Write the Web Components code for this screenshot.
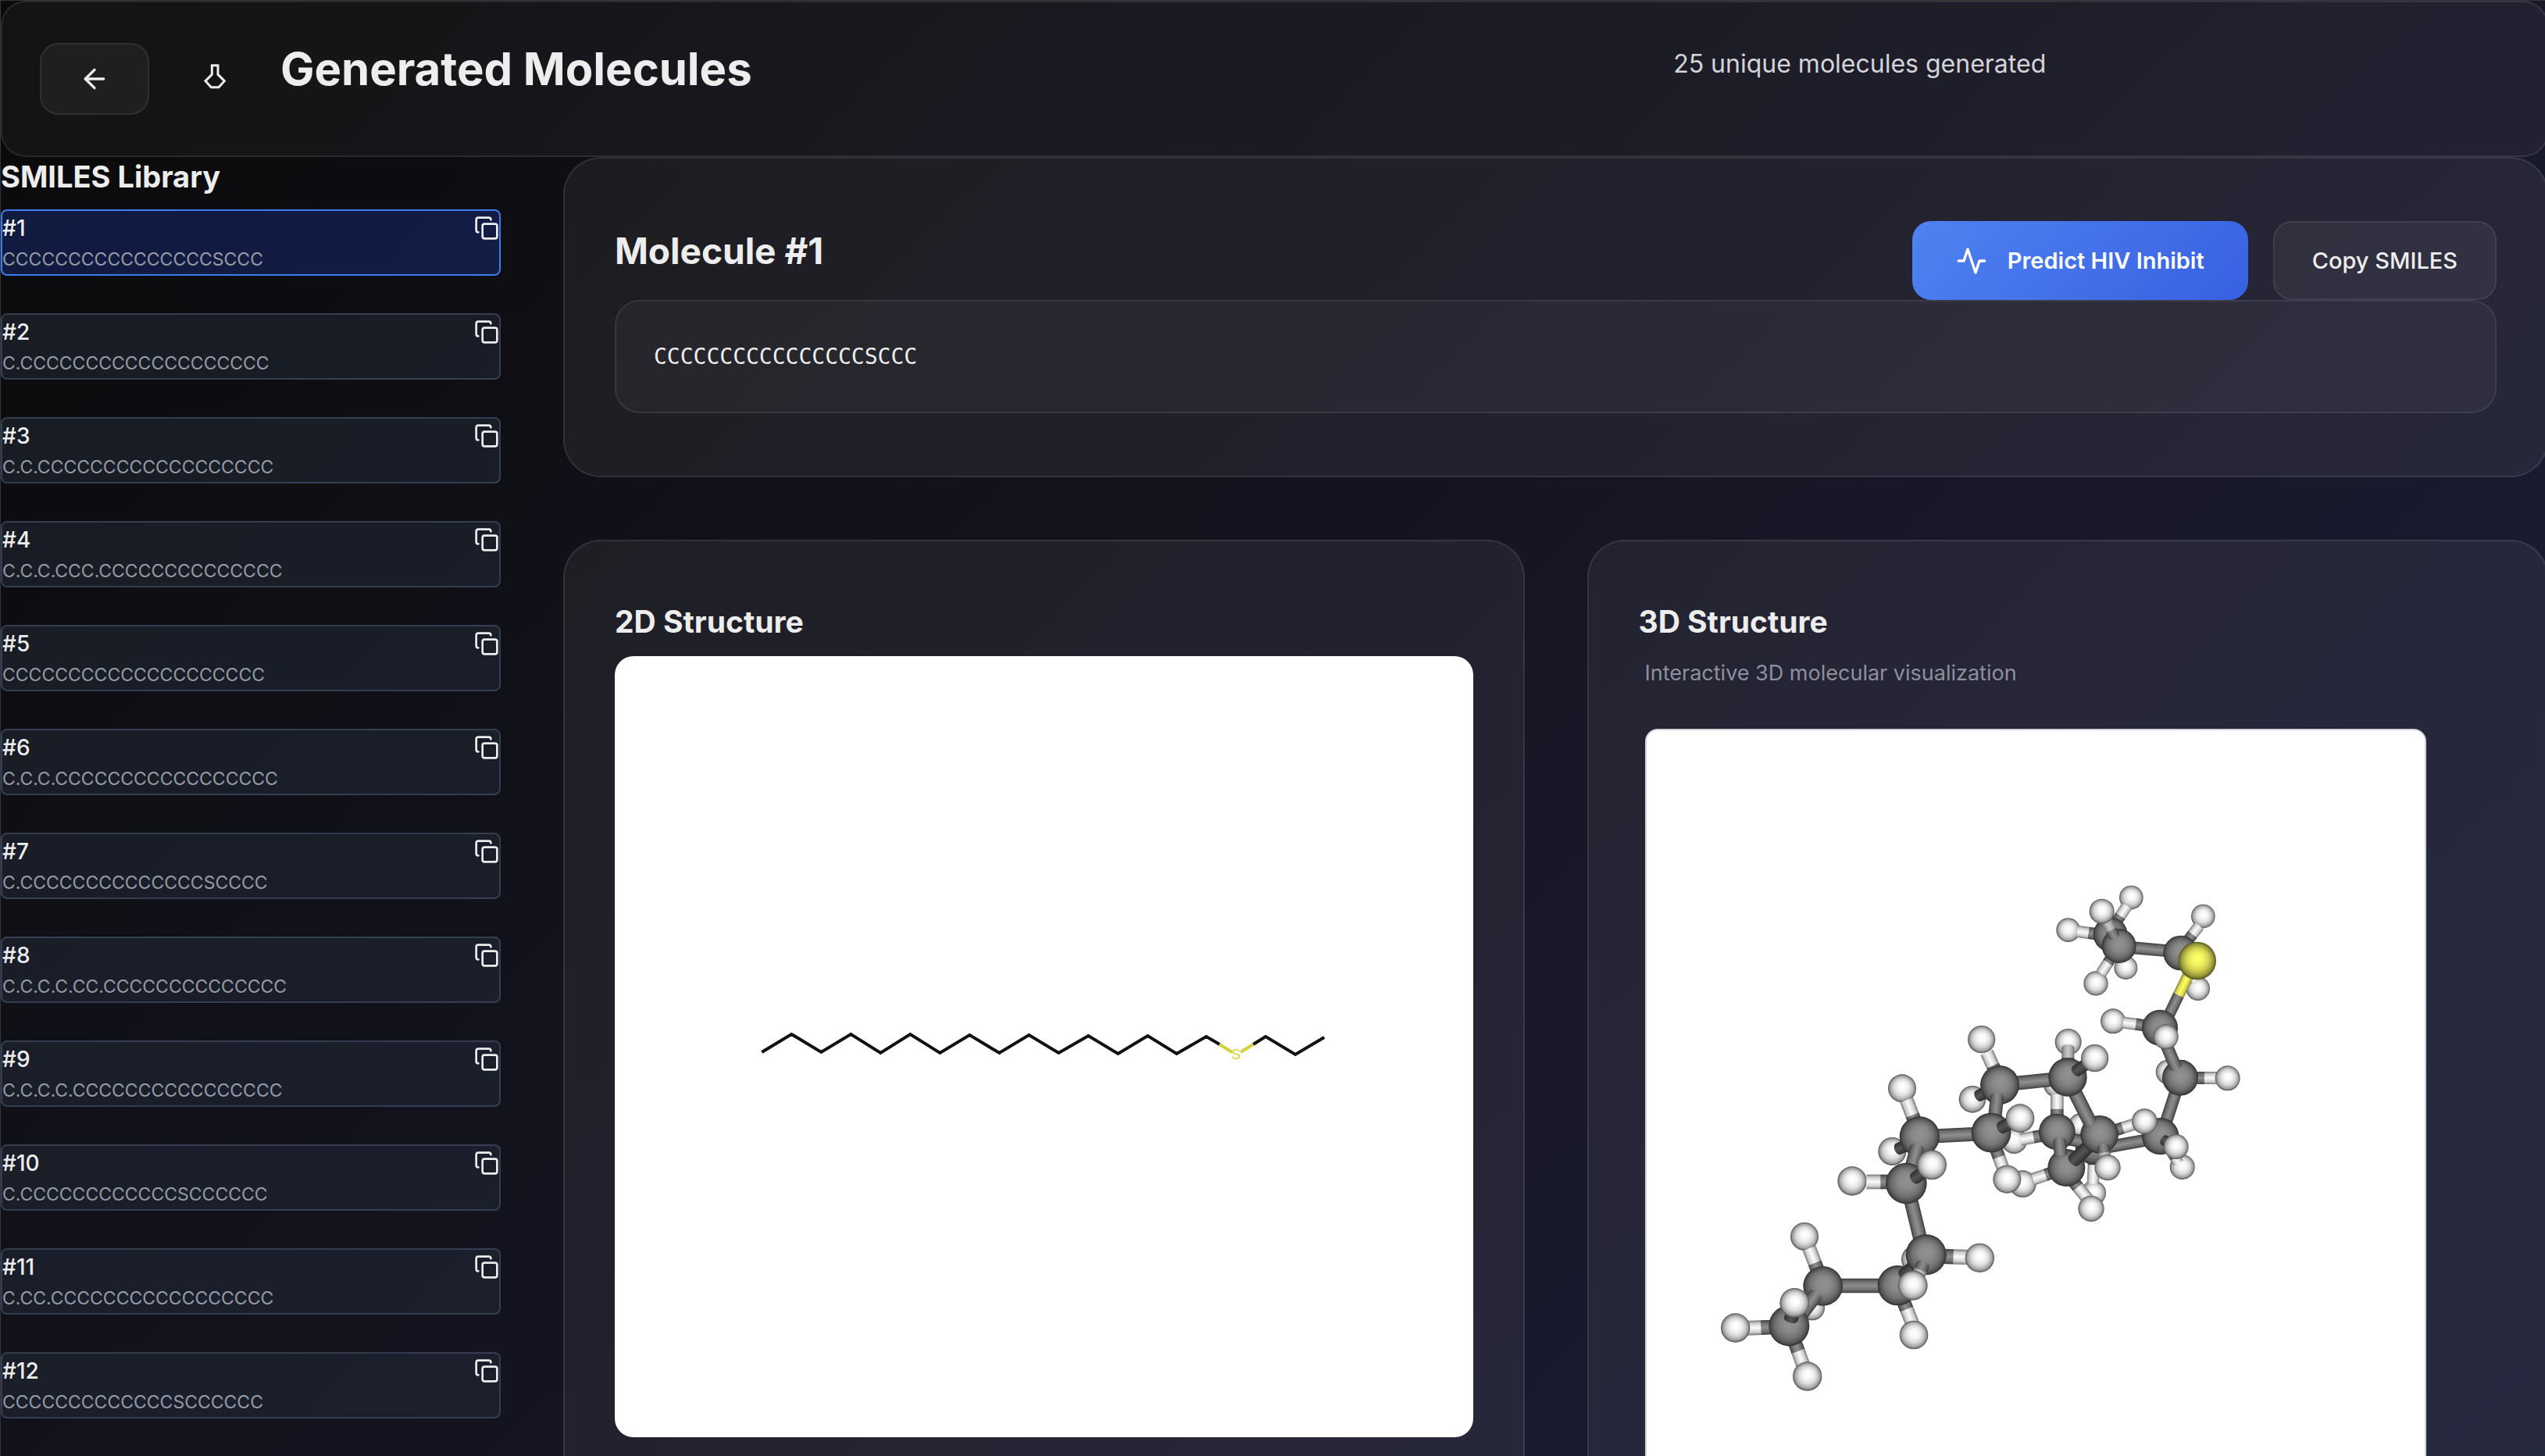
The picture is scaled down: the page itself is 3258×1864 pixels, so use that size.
<!DOCTYPE html>
<html lang="en">
<head>
<meta charset="utf-8">
<title>Generated Molecules</title>
<style>
  html { background: #0a0a0a; }
  body {
    margin: 0;
    height: 100vh;
    overflow: hidden;
    color: #ededed;
    font-family: Inter, "Liberation Sans", sans-serif;
    background: linear-gradient(135deg, #0a0a0a 0%, #1a1a2e 74%, #16213e 148%);
  }
</style>
</head>
<body>
<molecule-app></molecule-app>

<script>
const define = (name, html, setup) => customElements.define(name, class extends HTMLElement {
  constructor() {
    super();
    this.attachShadow({ mode: "open" }).innerHTML = html;
  }
  connectedCallback() {
    if (setup && !this.ready) { this.ready = true; setup(this, this.shadowRoot); }
  }
});

/* ---------- icons ---------- */
const ICONS = {
  back: ["0 0 24 24", '<path d="m12 19-7-7 7-7"/><path d="M19 12H5"/>'],
  pulse: ["0 0 24 24", '<path d="M22 12h-4l-3 9L9 3l-3 9H2"/>'],
  copy: ["0 0 24 24", '<rect x="8" y="8" width="14" height="14" rx="2"/><path d="M4 16c-1.100 0-2-.900-2-2V4c0-1.100.900-2 2-2h10c1.100 0 2 .900 2 2"/>'],
  flask: ["90 60 90 105", '<path stroke-width="9" stroke-linejoin="miter" d="M124 71V106L99 131L121 155H150L172 131L147 106V71Z"/>']
};
define("app-icon", `
  <style>
    :host { display: block; width: 40px; height: 40px; flex: none; }
    svg { display: block; width: 100%; height: 100%; fill: none; stroke: currentColor; stroke-width: 2; stroke-linecap: round; stroke-linejoin: round; }
  </style>
  <svg aria-hidden="true"></svg>`, (el, root) => {
  const [box, shapes] = ICONS[el.getAttribute("name")];
  const svg = root.querySelector("svg");
  svg.setAttribute("viewBox", box);
  svg.innerHTML = shapes;
});

/* ---------- buttons ---------- */
define("app-button", `
  <style>
    :host { display: block; flex: none; }
    button {
      display: flex; align-items: center; justify-content: center; gap: 26px;
      box-sizing: border-box; height: 101px; padding: 0 48px;
      font: 500 29px/40px Inter, "Liberation Sans", sans-serif; color: #ededed;
      background: rgba(255,255,255,.05); border: 2px solid rgba(255,255,255,.08);
      border-radius: 24px; cursor: pointer;
    }
    :host([kind="primary"]) button {
      padding: 0 56px; border: 0; color: #fff; font-weight: 600;
      background: linear-gradient(135deg, #4f83f0, #3860e2);
    }
    :host([kind="icon"]) button { height: 92px; width: 140px; padding: 0; }
  </style>
  <button type="button"><slot></slot></button>`, (el, root) => {
  if (el.hasAttribute("label")) root.querySelector("button").setAttribute("aria-label", el.getAttribute("label"));
});

/* ---------- header ---------- */
define("app-header", `
  <style>
    :host { display: block; }
    header {
      display: flex; align-items: flex-start; padding: 52px 48px;
      background: rgba(255,255,255,.04); border: 2px solid rgba(255,255,255,.09); border-radius: 32px;
    }
    .mark { display: flex; align-items: center; height: 84px; padding: 0 69px; }
    .mark app-icon { width: 30px; height: 35px; }
    h1 { margin: 0; flex: 5 1 0; font-size: 58px; line-height: 66px; font-weight: 700; }
    p { margin: 0; flex: 3 1 0; font-size: 32px; line-height: 54px; color: #d4d4d8; }
  </style>
  <header>
    <app-button kind="icon" label="Back"><app-icon name="back"></app-icon></app-button>
    <div class="mark"><app-icon name="flask"></app-icon></div>
    <h1>Generated Molecules</h1>
    <p>25 unique molecules generated</p>
  </header>`);

/* ---------- sidebar ---------- */
define("smiles-item", `
  <style>
    :host {
      display: block; box-sizing: border-box; height: 85px;
      background: rgba(35,43,58,.5); border: 2px solid #353e50; border-radius: 8px;
    }
    :host([selected]) { background: rgba(29,58,160,.35); border-color: #3b7bf0; }
    .top { display: flex; justify-content: space-between; }
    .num { font-size: 28px; line-height: 44px; font-weight: 500; }
    .smiles { font-size: 23px; line-height: 37px; color: #959aa5; }
    button { display: block; padding: 6px 0; margin: 0; border: 0; background: none; color: #ededed; cursor: pointer; }
    app-icon { width: 32px; height: 32px; }
  </style>
  <div class="top"><span class="num"></span><button type="button" aria-label="Copy"><app-icon name="copy"></app-icon></button></div>
  <div class="smiles"><slot></slot></div>`, (el, root) => {
  root.querySelector(".num").textContent = "#" + el.getAttribute("number");
});

const c = n => "C".repeat(n);
const LIBRARY = [
  c(16) + "S" + c(3), "C." + c(19), "C.C." + c(18), "C.C.C.CCC." + c(14), c(20), "C.C.C." + c(17),
  "C." + c(14) + "S" + c(4), "C.C.C.C.CC." + c(14), "C.C.C.C." + c(16), "C." + c(12) + "S" + c(6),
  "C.CC." + c(17), c(13) + "S" + c(6)
];
define("smiles-library", `
  <style>
    :host { display: block; }
    h2 { margin: 0 0 17px; font-size: 38px; line-height: 50px; font-weight: 700; }
    .list { display: grid; gap: 48px; }
  </style>
  <h2>SMILES Library</h2>
  <div class="list"></div>`, (el, root) => {
  root.querySelector(".list").innerHTML = LIBRARY.map((s, i) =>
    `<smiles-item number="${i + 1}"${i ? "" : " selected"}>${s}</smiles-item>`).join("");
});

/* ---------- cards ---------- */
define("glass-card", `
  <style>
    :host {
      display: block; box-sizing: border-box; padding: 80px 64px;
      background: rgba(255,255,255,.06); border: 2px solid rgba(255,255,255,.09); border-radius: 48px;
    }
    h3 { margin: 0 0 21px; font-size: 39px; line-height: 46px; font-weight: 700; }
    h3:empty { display: none; }
  </style>
  <h3></h3><slot></slot>`, (el, root) => {
  root.querySelector("h3").textContent = el.getAttribute("heading") || "";
});

define("molecule-summary", `
  <style>
    :host { display: block; }
    .row { display: flex; align-items: flex-start; gap: 32px; }
    h2 { margin: 0; flex: 1; font-size: 46px; line-height: 77px; font-weight: 700; }
    .code {
      padding: 48px; font: 28px/45px "DejaVu Sans Mono", monospace;
      background: rgba(255,255,255,.04); border: 2px solid rgba(255,255,255,.08); border-radius: 32px;
    }
  </style>
  <div class="row">
    <h2>Molecule #1</h2>
    <app-button kind="primary"><app-icon name="pulse"></app-icon>Predict HIV Inhibit</app-button>
    <app-button>Copy SMILES</app-button>
  </div>
  <div class="code">${LIBRARY[0]}</div>`);

/* ---------- 2D skeleton ---------- */
define("structure-2d", `
  <style>
    :host { display: block; height: 1000px; background: #fff; border-radius: 24px; overflow: hidden; }
    svg { display: block; width: 100%; height: 100%; }
  </style>
  <svg viewBox="0 0 1098 1000" role="img" aria-label="2D structure">
    <g fill="none" stroke-width="4" stroke-linejoin="miter">
      <path stroke="#111" d="M188 507L226 484L264 507L302 484L340 508L378 484L416 508L454 485L492 508L530 485L568 508L606 486L644 509L682 486L719 509L757 487L774 497"/>
      <path stroke="#111" d="M817 497L833 487L871 510L908 488"/>
      <path stroke="#d2d23a" d="M774 497L790 507M801 507L817 497"/>
    </g>
    <text x="795" y="516" text-anchor="middle" font-family="Liberation Sans, sans-serif" font-size="18" fill="#d4d430">S</text>
  </svg>`);

/* ---------- 3D ball and stick model, painted back to front ---------- */
const BALL = { C: "gc", H: "gh", S: "gs" };
const ROD = { C: "rc", H: "rh", S: "rs", D: "rd", G: "rg" };
const atom = (kind, x, y, r) => `<circle cx="${x}" cy="${y}" r="${r}" fill="url(#${BALL[kind]})"/>`;
/* rod from (x1,y1) to (x2,y2); the first kind covers the share k, the second the rest; cap rounds the first end */
const rod = (x1, y1, x2, y2, a, b = a, k = 1, cap = 0, w = 50) => {
  const L = Math.hypot(x2 - x1, y2 - y1), t = Math.atan2(y2 - y1, x2 - x1) * 180 / Math.PI, h = w / 2;
  const start = cap ? `M0 ${-h}A${cap} ${h} 0 0 0 0 ${h}` : `M0 ${-h}V${h}`;
  return `<g transform="translate(${x1} ${y1}) rotate(${t.toFixed(1)})">` +
    (k < 1 ? `<rect x="${(L * k - 1).toFixed(1)}" y="${-h}" width="${(L * (1 - k) + 1).toFixed(1)}" height="${w}" fill="url(#${ROD[b]})"/>` : "") +
    `<path d="${start}H${(L * k).toFixed(1)}V${-h}Z" fill="url(#${ROD[a]})"/></g>`;
};
const MODEL = [
  /* propyl end */
  atom("H", 1684, 420, 45), atom("H", 1463, 275, 46), atom("H", 1705, 150, 46),
  rod(1497, 280, 1570, 290, "H", "C", .6, 0, 46), rod(1689, 182, 1642, 252, "H", "C", .55, 0, 44),
  atom("C", 1625, 292, 66),
  atom("H", 1569, 480, 47), rod(1589, 442, 1632, 375, "H", "C", .62, 0, 44),
  rod(1700, 342, 1850, 355, "C", "C", 1, 0, 48), atom("C", 1658, 336, 66),
  rod(1638, 296, 1604, 228, "C", "G", .3, 14, 44), atom("H", 1592, 203, 48),
  atom("H", 1981, 222, 46), rod(1966, 258, 1915, 325, "H", "C", .5, 0, 44),
  atom("H", 1961, 500, 46), rod(1950, 472, 1915, 420, "H", "C", .5, 0, 40),
  atom("C", 1895, 363, 67),
  rod(1928, 440, 1838, 625, "S", "C", .46, 0, 44), atom("S", 1958, 393, 73),
  /* chain below the sulphur */
  atom("H", 1635, 625, 48), rod(1674, 630, 1760, 642, "H", "C", .56, 0, 46), atom("C", 1815, 650, 69),
  atom("H", 1846, 820, 47),
  rod(1958, 843, 2045, 843, "C", "H", .32, 0, 48), atom("H", 2075, 844, 48),
  rod(1878, 890, 1836, 1020, "C", "C", 1, 0, 48), atom("C", 1893, 842, 69),
  rod(1875, 800, 1835, 705, "C", "C", 1, 14, 48), atom("H", 1838, 685, 48),
  /* atoms behind the turn */
  atom("H", 1510, 1025, 46), atom("H", 1560, 1285, 48), rod(1558, 1250, 1562, 1160, "H", "C", .8, 0, 46),
  atom("C", 1560, 1105, 70), rod(1615, 1108, 1770, 1080, "C", "C", 1, 0, 48), rod(1470, 1078, 1530, 1090, "C", "C", 1, 0, 50),
  atom("H", 1901, 1185, 48), rod(1886, 1170, 1862, 1130, "H", "C", .5, 0, 42),
  atom("C", 1817, 1067, 71), rod(1832, 1082, 1862, 1100, "D", "D", 1, 14, 42), atom("H", 1877, 1107, 48),
  atom("H", 1417, 868, 49), rod(1420, 905, 1420, 1000, "H", "C", .6, 0, 50),
  atom("H", 1255, 1084, 50), rod(1280, 1080, 1360, 1065, "H", "C", .62, 0, 48),
  atom("C", 1420, 1050, 70),
  atom("H", 1288, 1250, 52), rod(1328, 1232, 1410, 1204, "H", "C", .58, 0, 48),
  rod(1482, 1240, 1546, 1318, "C", "H", .28, 0, 48), atom("H", 1551, 1345, 50),
  atom("C", 1456, 1188, 72), rod(1430, 1087, 1434, 1140, "C", "C", 1, 18, 50),
  rod(1484, 1160, 1560, 1088, "D", "D", 1, 16, 52),
  rod(1640, 1045, 1725, 1018, "C", "H", .38, 0, 46), atom("H", 1756, 1010, 49),
  atom("C", 1583, 1060, 73), rod(1546, 1012, 1484, 890, "C", "C", 1, 12, 54),
  rod(1598, 1108, 1603, 1150, "C", "G", .5, 14, 48), atom("H", 1614, 1187, 50),
  atom("H", 1463, 705, 51), rod(1462, 726, 1462, 790, "G", "C", .6, 12, 48),
  rod(1255, 864, 1410, 848, "C", "C", 1, 0, 54), atom("C", 1461, 840, 74),
  rod(1494, 816, 1538, 786, "D", "D", 1, 16, 46), atom("H", 1565, 767, 53),
  atom("H", 1095, 925, 52), rod(1118, 912, 1150, 896, "D", "D", 1, 14, 46),
  atom("H", 1130, 695, 53), rod(1150, 745, 1182, 815, "H", "C", .72, 0, 52),
  atom("C", 1200, 870, 75), rod(1190, 915, 1178, 1020, "C", "C", 1, 16, 52),
  rod(960, 1066, 1120, 1058, "C", "C", 1, 0, 54),
  rod(1186, 1118, 1220, 1210, "C", "H", .32, 0, 50), atom("H", 1228, 1232, 54),
  atom("C", 1167, 1053, 76), rod(1206, 1034, 1256, 1008, "D", "D", 1, 16, 48), atom("H", 1278, 998, 55),
  /* left half */
  atom("H", 787, 1125, 54), rod(810, 1116, 845, 1100, "D", "D", 1, 14, 46),
  atom("H", 825, 883, 54), rod(842, 928, 876, 1015, "H", "C", .66, 0, 54), atom("C", 892, 1068, 77),
  rod(882, 1112, 862, 1185, "C", "C", 1, 16, 54),
  atom("H", 633, 1239, 56), rod(688, 1242, 775, 1242, "H", "C", .62, 0, 56),
  rod(858, 1310, 898, 1475, "C", "C", 1, 0, 54), atom("C", 841, 1248, 79),
  rod(874, 1228, 915, 1198, "D", "D", 1, 16, 48), atom("H", 939, 1177, 57),
  atom("H", 876, 1540, 54),
  rod(590, 1641, 745, 1641, "C", "C", 1, 0, 56),
  rod(830, 1700, 868, 1795, "C", "H", .33, 0, 54), atom("H", 870, 1830, 55),
  atom("C", 808, 1640, 77), rod(832, 1602, 880, 1560, "D", "D", 1, 16, 54),
  rod(980, 1528, 1090, 1532, "C", "H", .38, 0, 58), atom("H", 1123, 1534, 56),
  atom("C", 917, 1522, 78), rod(904, 1562, 880, 1620, "C", "G", .32, 16, 52), atom("H", 866, 1640, 57),
  atom("H", 480, 1726, 48), atom("H", 450, 1452, 54), rod(468, 1497, 500, 1580, "H", "C", .68, 0, 54),
  atom("C", 521, 1642, 76), rod(492, 1678, 430, 1760, "C", "C", 1, 16, 56),
  rod(225, 1804, 330, 1800, "H", "C", .55, 0, 56), atom("H", 185, 1803, 56),
  rod(412, 1855, 450, 1960, "C", "H", .36, 0, 54), atom("H", 461, 1989, 56),
  atom("C", 391, 1795, 78), rod(398, 1770, 406, 1740, "D", "D", 1, 14, 54), atom("H", 412, 1707, 57)
].join("");
const stops = list => list.map(([o, col]) => `<stop offset="${o}" stop-color="${col}"/>`).join("");
const ball = (id, list) => `<radialGradient id="${id}" cx=".5" cy=".5" r=".5" fx=".52" fy=".42">${stops(list)}</radialGradient>`;
const tube = (id, edge, mid) => `<linearGradient id="${id}" x1="0" y1="0" x2="0" y2="1">${stops([[0, edge[0]], [.2, edge[1]], [.5, mid], [.8, edge[1]], [1, edge[0]]])}</linearGradient>`;
define("structure-3d", `
  <style>
    :host { display: block; padding: 0 8px; }
    p { margin: 0 0 49px; font-size: 27px; line-height: 44px; color: #8d909e; }
    .view {
      box-sizing: border-box; max-width: 1000px; aspect-ratio: 1;
      background: #fff; border: 2px solid #d1d5db; border-radius: 16px; overflow: hidden;
    }
    svg { display: block; width: 100%; height: 100%; }
  </style>
  <p>Interactive 3D molecular visualization</p>
  <div class="view">
    <svg viewBox="-156 -492 2988 2988" role="img" aria-label="3D structure">
      <defs>
        ${ball("gc", [[0, "#929292"], [.4, "#888888"], [.7, "#707070"], [.9, "#4e4e4e"], [1, "#2c2c2c"]])}
        ${ball("gh", [[0, "#ffffff"], [.3, "#f8f8f8"], [.6, "#dadada"], [.85, "#a2a2a2"], [1, "#525252"]])}
        ${ball("gs", [[0, "#ffff66"], [.3, "#f5f560"], [.6, "#d0d052"], [.85, "#969639"], [1, "#505020"]])}
        ${tube("rc", ["#3c3c3c", "#6c6c6c"], "#8f8f8f")}
        ${tube("rh", ["#757575", "#cfcfcf"], "#fbfbfb")}
        ${tube("rs", ["#84842e", "#d8d84e"], "#ffff62")}
        ${tube("rd", ["#2a2a2a", "#404040"], "#545454")}
        ${tube("rg", ["#6a6a6a", "#a4a4a4"], "#c8c8c8")}
      </defs>
      ${MODEL}
    </svg>
  </div>`);

/* ---------- page ---------- */
define("molecule-app", `
  <style>
    :host { display: block; margin-right: -4px; border: solid #36363a; border-width: 1px 0 0 1px; }
    main { display: grid; grid-template-columns: 640px minmax(0, 1fr); column-gap: 80px; align-items: start; }
    .detail { display: grid; gap: 80px; }
    .pair { display: grid; grid-template-columns: 1fr 1fr; gap: 80px; }
  </style>
  <app-header></app-header>
  <main>
    <smiles-library></smiles-library>
    <div class="detail">
      <glass-card><molecule-summary></molecule-summary></glass-card>
      <div class="pair">
        <glass-card heading="2D Structure"><structure-2d></structure-2d></glass-card>
        <glass-card heading="3D Structure"><structure-3d></structure-3d></glass-card>
      </div>
    </div>
  </main>`);
</script>
</body>
</html>
